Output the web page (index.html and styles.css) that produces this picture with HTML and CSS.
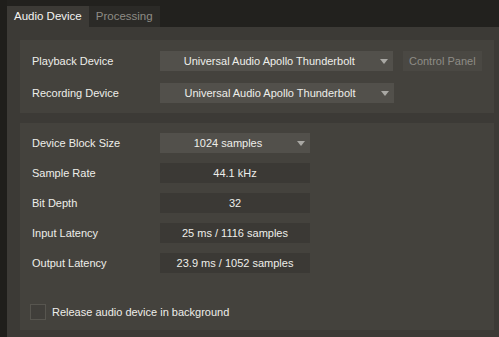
FILE: index.html
```html
<!DOCTYPE html>
<html>
<head>
<meta charset="utf-8">
<link rel="stylesheet" href="styles.css">
</head>
<body>
<div class="app">
  <div class="tabs">
    <div class="tab active">Audio Device</div>
    <div class="tab">Processing</div>
  </div>
  <div class="panel">
    <div class="group">
      <div class="row">
        <div class="label">Playback Device</div>
        <div class="select wide"><span class="val">Universal Audio Apollo Thunderbolt</span><span class="arrow"></span></div>
        <div class="button">Control Panel</div>
      </div>
      <div class="row">
        <div class="label">Recording Device</div>
        <div class="select wide"><span class="val">Universal Audio Apollo Thunderbolt</span><span class="arrow"></span></div>
      </div>
    </div>
    <div class="group group2">
      <div class="row tight">
        <div class="label">Device Block Size</div>
        <div class="select narrow"><span class="val">1024 samples</span><span class="arrow"></span></div>
      </div>
      <div class="row tight">
        <div class="label">Sample Rate</div>
        <div class="field">44.1 kHz</div>
      </div>
      <div class="row tight">
        <div class="label">Bit Depth</div>
        <div class="field">32</div>
      </div>
      <div class="row tight">
        <div class="label">Input Latency</div>
        <div class="field">25 ms / 1116 samples</div>
      </div>
      <div class="row tight">
        <div class="label">Output Latency</div>
        <div class="field">23.9 ms / 1052 samples</div>
      </div>
      <div class="check-row">
        <span class="checkbox"></span>
        <span class="check-label">Release audio device in background</span>
      </div>
    </div>
  </div>
</div>
</body>
</html>
```

FILE: styles.css
```css
html, body {
  margin: 0;
  padding: 0;
  height: 100%;
}
body {
  background: #1f1e1b;
  font-family: "Liberation Sans", Arial, sans-serif;
  font-size: 11px;
  color: #eeeeea;
  overflow: hidden;
}
.app {
  margin-left: 7px;
  height: 337px;
  display: flex;
  flex-direction: column;
  background: #22211e;
}
.tabs {
  display: flex;
  padding-top: 6px;
  height: 21px;
  flex: none;
}
.tab {
  height: 21px;
  line-height: 21px;
  padding: 0 7px 0 7px;
  background: #2b2a27;
  color: #8e8c86;
  font-size: 11.5px;
}
.tab.active {
  background: #3c3a36;
  color: #f4f4f2;
}
.panel {
  flex: 1;
  background: #3c3a36;
  padding: 13px 5px 0 13px;
  display: flex;
  flex-direction: column;
  gap: 10px;
}
.group {
  flex: none;
  background: #44423d;
  padding: 11px 12px 10px 12px;
  display: flex;
  flex-direction: column;
  gap: 12px;
}
.group2 {
  padding-top: 10px;
  gap: 10px;
  height: 207px;
  box-sizing: border-box;
}
.row {
  display: flex;
  align-items: center;
  height: 20px;
  flex: none;
}
.label {
  width: 128px;
  flex: none;
}
.select {
  height: 20px;
  background: #52504b;
  display: flex;
  align-items: center;
  position: relative;
  padding-right: 14px;
  box-sizing: border-box;
}
.select .val {
  flex: 1;
  text-align: center;
}
.select .arrow {
  position: absolute;
  right: 5px;
  top: 8px;
  width: 0;
  height: 0;
  border-left: 4.5px solid transparent;
  border-right: 4.5px solid transparent;
  border-top: 5px solid #a9a8a4;
}
.wide { width: 234px; }
.narrow { width: 150px; }
.button {
  margin-left: 10px;
  width: 80px;
  height: 20px;
  line-height: 20px;
  text-align: center;
  background: #4a4843;
  color: #8e8c86;
}
.field {
  width: 150px;
  height: 20px;
  line-height: 20px;
  text-align: center;
  background: #3b3935;
}
.check-row {
  margin-top: 21px;
  display: flex;
  align-items: center;
  margin-left: -2px;
  flex: none;
}
.checkbox {
  width: 16px;
  height: 16px;
  box-sizing: border-box;
  border: 1px solid #57554f;
  background: #403e3a;
  margin-right: 6px;
}
```
